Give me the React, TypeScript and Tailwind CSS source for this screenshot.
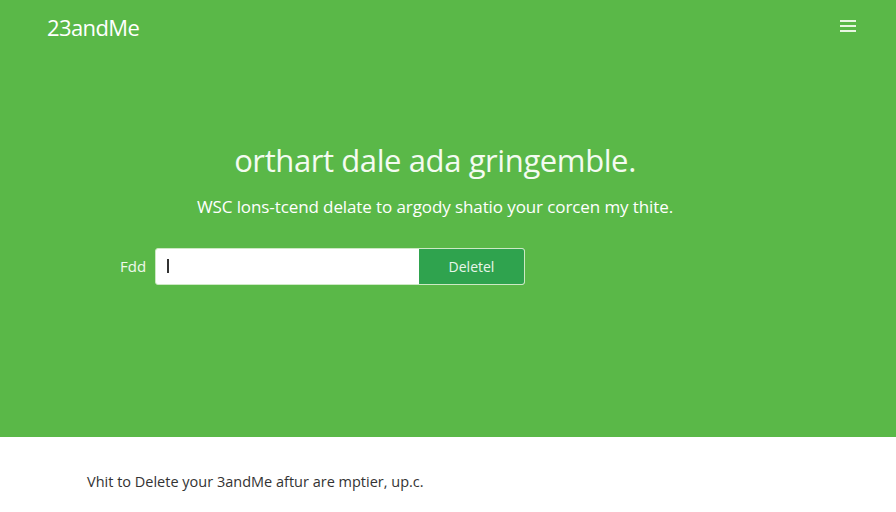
import React from 'react';

export default function App() {
  return (
    <div className="w-[896px] h-[512px] bg-white font-['Open_Sans',sans-serif] overflow-hidden flex flex-col">
      {/* Hero */}
      <section className="h-[437px] bg-[#5ab848] flex flex-col">
        <header className="flex items-center justify-between pl-[47px] pr-[40px] pt-[11px]">
          <div className="text-white text-[22px] tracking-[-0.6px] font-medium">23andMe</div>
          <div className="flex flex-col gap-[3px] w-[16px] -mt-[4px]">
            <span className="h-[2px] bg-[#e8f6e2]" />
            <span className="h-[2px] bg-[#e8f6e2]" />
            <span className="h-[2px] bg-[#e8f6e2]" />
          </div>
        </header>
        <div className="flex flex-col items-center mt-[96px] pr-[26px]">
          <h1 className="text-[#f4fbf1] text-[31px] leading-[40px] font-medium tracking-[-0.4px]">
            orthart dale ada gringemble.
          </h1>
          <p className="text-white text-[17px] mt-[14px] tracking-[-0.1px]">
            WSC lons-tcend delate to argody shatio your corcen my thite.
          </p>
        </div>
        <div className="flex items-center mt-[28px] ml-[120px]">
          <span className="text-[#f0f8ec] text-[15px] w-[35px]">Fdd</span>
          <div className="flex h-[37px] w-[370px] rounded-[3px] border border-[#cde9c4] bg-white overflow-hidden">
            <div className="flex-1 flex items-center pl-[11px]">
              <span className="w-[1.5px] h-[14px] bg-[#333]" />
            </div>
            <button className="w-[105px] bg-[#2fa34e] text-[#e8f6ea] text-[14px]">Deletel</button>
          </div>
        </div>
      </section>
      {/* Footer note */}
      <div className="pl-[87px] pt-[34px] text-[#333] text-[14.5px]">
        Vhit to Delete your 3andMe aftur are mptier, up.c.
      </div>
    </div>
  );
}
